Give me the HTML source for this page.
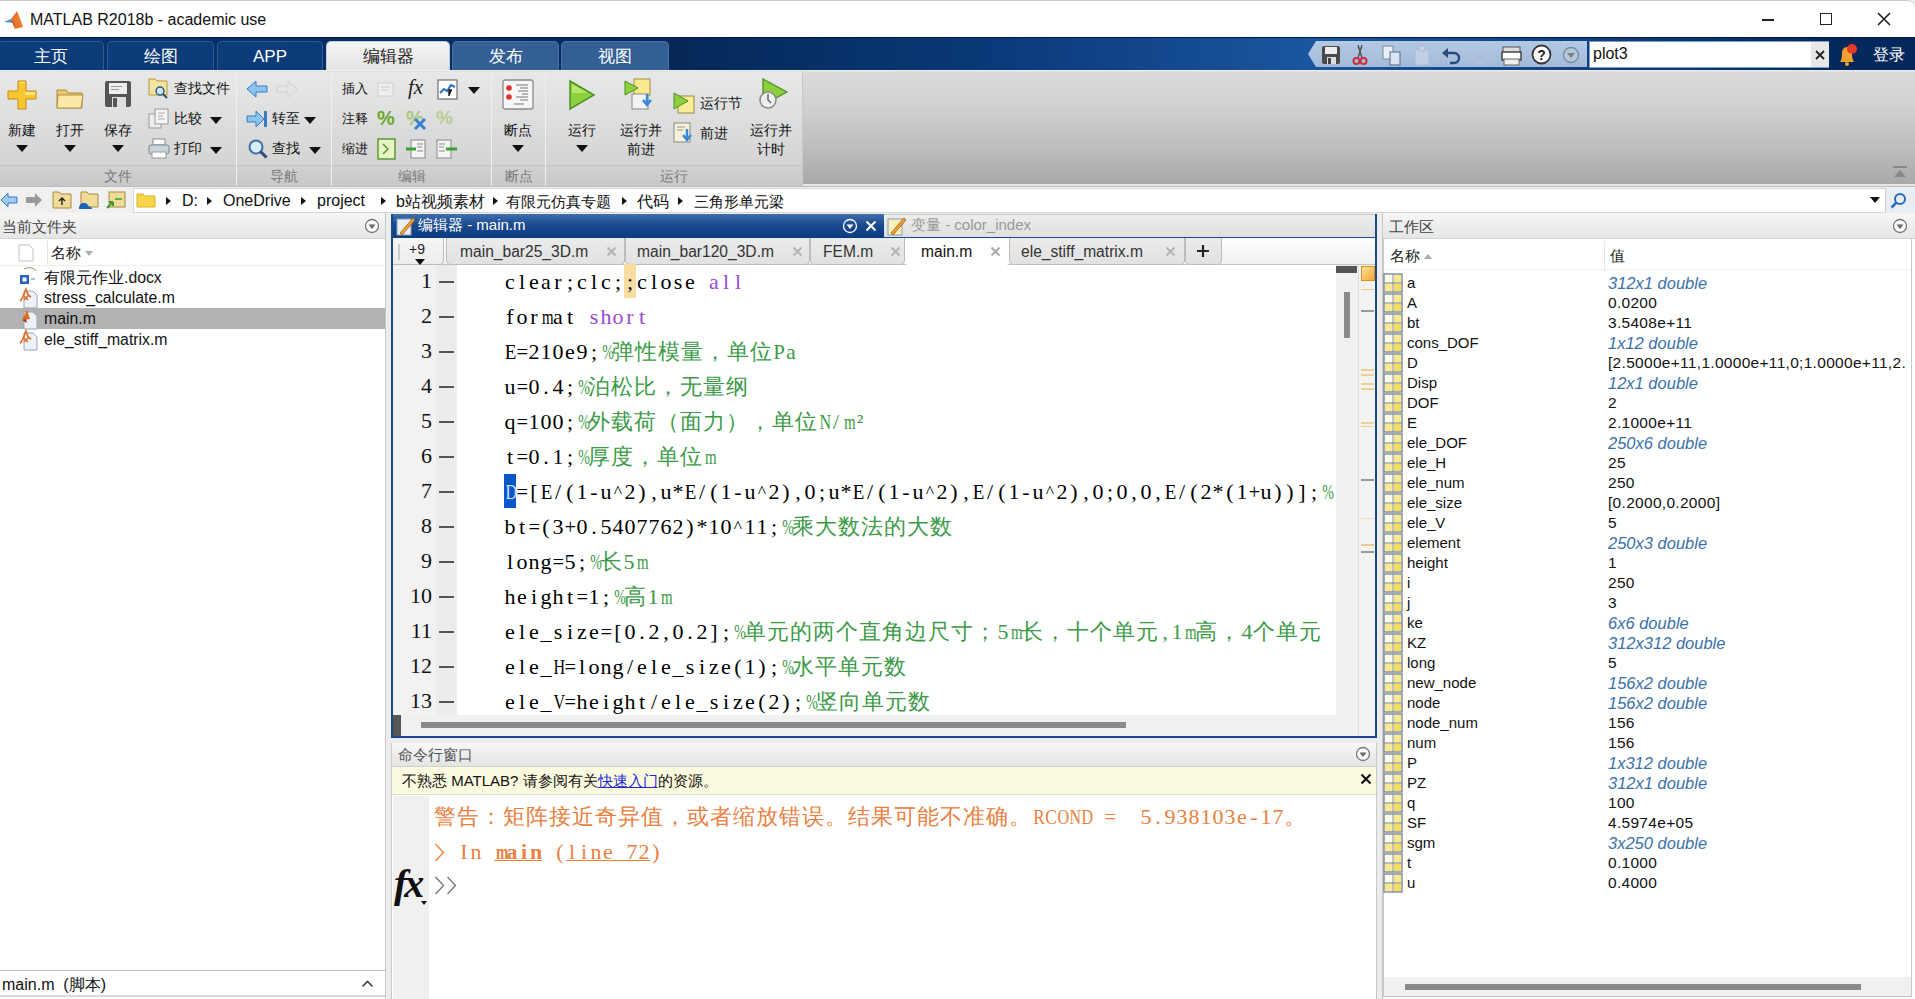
<!DOCTYPE html>
<html><head><meta charset="utf-8">
<style>
*{box-sizing:border-box;margin:0;padding:0}
html,body{width:1915px;height:999px;overflow:hidden;background:#ececec;font-family:"Liberation Sans",sans-serif;color:#000}
.a{position:absolute}
.t{position:absolute;white-space:nowrap}
#title{left:0;top:0;width:1915px;height:37px;background:#fff;border-top:1px solid #cfcfcf;border-radius:0 8px 0 0}
#tabbar{left:0;top:37px;width:1915px;height:33px;background:linear-gradient(90deg,#0a3470 0,#052858 680px,#0a3a7a 1000px,#1b55a0 1310px,#0f3f80 1600px,#05285c 1840px);border-top:1px solid #03183a}
.tab{position:absolute;top:3px;height:29px;border-radius:5px 5px 0 0;background:#0b3b78;border:1px solid #2d5b93;border-bottom:none;color:#fff;font-size:17px;text-align:center;line-height:29px}
.tab.sel{background:linear-gradient(#f4f4f4,#e4e4e4);color:#222;border-color:#c0d0e0;top:3px;height:30px}
#ribbon{left:0;top:70px;width:1915px;height:116px;background:linear-gradient(#f4f4f4 0,#dadada 2px,#cfcfcf 35%,#b9b9b9 75%,#a8a8a8 100%);border-bottom:2px solid #e6e6e6}
.rl{position:absolute;font-size:13.5px;color:#111;white-space:nowrap}
.sec{position:absolute;top:95px;height:21px;background:linear-gradient(#d2d2d2,#c8c8c8);border-top:1px solid #c0c0c0;color:#7a7a7a;font-size:14px;text-align:center;line-height:20px}
.sep{position:absolute;top:4px;width:1px;height:112px;background:#c3c3c3;border-right:1px solid #f0f0f0}
.dd{position:absolute;width:0;height:0;border-left:6px solid transparent;border-right:6px solid transparent;border-top:7px solid #111}
#addr{left:0;top:186px;width:1915px;height:27px;background:#f0f0f0;border-top:1px solid #bdbdbd}
/*ED*/.cl{position:absolute;left:111px;height:35px;line-height:35px;font-family:"Liberation Serif",serif;font-size:22px;white-space:nowrap;color:#111}
.c{display:inline-block;width:12px;text-align:center;font-weight:normal}
.cj{letter-spacing:1px}
.ln{position:absolute;left:0;width:39px;text-align:right;height:35px;line-height:35px;font-family:"Liberation Serif",serif;font-size:22px;color:#111}
.etab{position:absolute;top:24px;height:27px;background:linear-gradient(#ebebeb,#e1e1e1);border:1px solid #bcbcbc;border-top:none;border-radius:0 0 5px 5px}
/*EDEND*/
.cmdl{position:absolute;left:42px;height:35px;line-height:35px;font-family:"Liberation Serif",serif;font-size:22px;white-space:nowrap}
</style></head><body>
<!-- TITLE -->
<div id="title" class="a">
 <svg class="a" style="left:3px;top:8px" width="22" height="22" viewBox="0 0 22 22">
  <path d="M1 13 L8 10 L11 14 Z" fill="#4a8fd0"/>
  <path d="M8 10 L14 2 L20 18 L12 20 Z" fill="#e8772a"/>
  <path d="M14 2 L17 9 L20 18 Z" fill="#f0a040"/>
  <path d="M8 10 L11 14 L12 20 Z" fill="#c84a1a"/>
 </svg>
 <div class="t" style="left:30px;top:10px;font-size:16px;color:#111">MATLAB R2018b - academic use</div>
 <div class="a" style="left:1762px;top:18px;width:12px;height:1.5px;background:#222"></div>
 <div class="a" style="left:1820px;top:12px;width:12px;height:12px;border:1.5px solid #222"></div>
 <svg class="a" style="left:1877px;top:11px" width="14" height="14"><path d="M1 1L13 13M13 1L1 13" stroke="#222" stroke-width="1.6"/></svg>
</div>
<!-- TABBAR -->
<div id="tabbar" class="a">
 <div class="tab" style="left:-2px;width:106px">主页</div>
 <div class="tab" style="left:107px;width:107px">绘图</div>
 <div class="tab" style="left:217px;width:106px">APP</div>
 <div class="tab sel" style="left:326px;width:124px">编辑器</div>
 <div class="tab" style="left:452px;width:107px;background:#335f95;border-color:#4a75a8">发布</div>
 <div class="tab" style="left:561px;width:108px;background:#335f95;border-color:#4a75a8">视图</div>
 <div class="a" style="left:1308px;top:3px;width:279px;height:26px;background:linear-gradient(#b4c9e3,#a2bad9);clip-path:polygon(8px 0,100% 0,100% 100%,8px 100%,0 50%)"></div>
 <svg class="a" style="left:1321px;top:7px" width="20" height="20" viewBox="0 0 20 20"><rect x="1" y="1" width="18" height="18" rx="2" fill="#4a4a4a"/><rect x="4" y="2" width="12" height="7" fill="#eee"/><rect x="6" y="12" width="9" height="7" fill="#ddd"/><rect x="7" y="13" width="3" height="6" fill="#444"/></svg>
 <svg class="a" style="left:1352px;top:6px" width="16" height="22" viewBox="0 0 16 22"><path d="M10 1L6 14M6 1l4 13" stroke="#555" stroke-width="1.5"/><circle cx="4.5" cy="17" r="3" fill="none" stroke="#d03040" stroke-width="2"/><circle cx="11.5" cy="17" r="3" fill="none" stroke="#d03040" stroke-width="2"/></svg>
 <svg class="a" style="left:1382px;top:7px" width="20" height="21" viewBox="0 0 20 21"><rect x="1" y="1" width="10" height="13" fill="#e8eef6" stroke="#7a8aa0"/><rect x="8" y="7" width="10" height="13" fill="#d8e4f2" stroke="#5a6a88"/></svg>
 <svg class="a" style="left:1412px;top:7px" width="20" height="21" viewBox="0 0 20 21"><rect x="3" y="4" width="14" height="16" fill="#c0d0e4" stroke="#a8b8d0"/><rect x="7" y="1" width="6" height="5" fill="#c8d4e4" stroke="#a8b8d0"/></svg>
 <svg class="a" style="left:1441px;top:8px" width="21" height="19" viewBox="0 0 21 19"><path d="M3 7h10a5 5 0 010 10H9" stroke="#2a4a7a" stroke-width="2.5" fill="none"/><path d="M1 7l6-5v10z" fill="#2a4a7a"/></svg>
 <svg class="a" style="left:1471px;top:8px" width="21" height="19" viewBox="0 0 21 19"><path d="M18 7H8a5 5 0 000 10h4" stroke="#b0c0d8" stroke-width="2.5" fill="none"/><path d="M20 7l-6-5v10z" fill="#b0c0d8"/></svg>
 <svg class="a" style="left:1501px;top:7px" width="21" height="21" viewBox="0 0 21 21"><rect x="2" y="2" width="17" height="6" fill="#ddd" stroke="#555"/><rect x="1" y="7" width="19" height="8" fill="#fff" stroke="#444" stroke-width="1.5"/><rect x="3" y="14" width="15" height="6" fill="#eee" stroke="#666"/></svg>
 <svg class="a" style="left:1531px;top:6px" width="21" height="21" viewBox="0 0 21 21"><circle cx="10.5" cy="10.5" r="9" fill="#fff" stroke="#333" stroke-width="1.8"/><text x="10.5" y="15.5" text-anchor="middle" font-family="Liberation Sans" font-weight="bold" font-size="14" fill="#222">?</text></svg>
 <svg class="a" style="left:1562px;top:8px" width="18" height="18" viewBox="0 0 18 18"><circle cx="9" cy="9" r="7.5" fill="#b8c8dc" stroke="#7a8aa0" stroke-width="1.3"/><path d="M5 7h8l-4 5z" fill="#7a8090"/></svg>
 <div class="a" style="left:1589px;top:3px;width:240px;height:27px;background:#fff;border:1px solid #7a9cc8"></div>
 <div class="t" style="left:1593px;top:7px;font-size:16px;color:#111">plot3</div>
 <div class="a" style="left:1811px;top:4px;width:18px;height:25px;background:#e8e8e8"></div>
 <svg class="a" style="left:1815px;top:12px" width="10" height="10"><path d="M1 1L9 9M9 1L1 9" stroke="#222" stroke-width="1.8"/></svg>
 <svg class="a" style="left:1836px;top:5px" width="22" height="24" viewBox="0 0 22 24"><path d="M4 19c2-3 2-6 2-9 0-3 2-6 5-6s5 3 5 6c0 3 0 6 2 9z" fill="#f4a030"/><circle cx="11" cy="21" r="2" fill="#f4a030"/><circle cx="16" cy="6" r="5" fill="#e83a2a"/></svg>
 <div class="t" style="left:1873px;top:7px;font-size:16px;color:#fff">登录</div>
</div>
<!-- RIBBON -->
<div id="ribbon" class="a">
 <div class="a" style="left:0;top:2px;width:802px;height:112px;background:linear-gradient(#e8e8e8,#dcdcdc 50%,#d0d0d0)"></div>
 <!-- 文件 section -->
 <svg class="a" style="left:7px;top:10px" width="30" height="30" viewBox="0 0 30 30"><path d="M11 1h8v10h10v8H19v10h-8V19H1v-8h10z" fill="#f7c630" stroke="#c98a10" stroke-width="1"/><path d="M12 2h6v10h10v3H18V3h-6z" fill="#fff2a0" opacity=".7"/></svg>
 <svg class="a" style="left:56px;top:17px" width="28" height="22" viewBox="0 0 28 22"><path d="M1 3h9l2 3h14v15H1z" fill="#e8c870" stroke="#a98a40"/><path d="M2 8h25l-2 13H1z" fill="#fbe9a8" stroke="#b09040"/></svg>
 <svg class="a" style="left:104px;top:10px" width="28" height="28" viewBox="0 0 28 28"><rect x="1" y="1" width="26" height="26" rx="2" fill="#555"/><rect x="5" y="3" width="18" height="11" fill="#eee"/><rect x="8" y="17" width="14" height="10" fill="#ddd"/><rect x="9" y="18" width="4" height="9" fill="#555"/><rect x="7" y="6" width="11" height="1" fill="#999"/><rect x="7" y="9" width="8" height="1" fill="#999"/></svg>
 <div class="rl" style="left:8px;top:52px">新建</div>
 <div class="rl" style="left:56px;top:52px">打开</div>
 <div class="rl" style="left:104px;top:52px">保存</div>
 <div class="dd" style="left:16px;top:75px"></div>
 <div class="dd" style="left:64px;top:75px"></div>
 <div class="dd" style="left:112px;top:75px"></div>
 <svg class="a" style="left:148px;top:8px" width="22" height="22" viewBox="0 0 22 22"><path d="M1 1h6l2 2h10v14H1z" fill="#f4e4a0" stroke="#b8953a"/><circle cx="12" cy="13" r="4" fill="#cfe4f7" stroke="#2a5a8a" stroke-width="1.5"/><path d="M15 16l4 4" stroke="#2a4a6a" stroke-width="2"/></svg>
 <div class="rl" style="left:174px;top:10px">查找文件</div>
 <svg class="a" style="left:148px;top:38px" width="22" height="22" viewBox="0 0 22 22"><rect x="1" y="6" width="12" height="14" fill="#eee" stroke="#999"/><rect x="7" y="1" width="13" height="15" fill="#f5f5f5" stroke="#999"/><path d="M10 5h7M10 8h5M10 11h7" stroke="#aaa"/></svg>
 <div class="rl" style="left:174px;top:40px">比较</div>
 <div class="dd" style="left:210px;top:47px"></div>
 <svg class="a" style="left:148px;top:68px" width="22" height="22" viewBox="0 0 22 22"><rect x="5" y="1" width="12" height="6" fill="#fff" stroke="#888"/><rect x="1" y="7" width="20" height="9" rx="2" fill="#c8d4dc" stroke="#7a8a96"/><rect x="4" y="14" width="14" height="6" fill="#fff" stroke="#999"/></svg>
 <div class="rl" style="left:174px;top:70px">打印</div>
 <div class="dd" style="left:210px;top:77px"></div>
 <div class="sep" style="left:236px"></div>
 <!-- 导航 -->
 <svg class="a" style="left:246px;top:10px" width="22" height="18" viewBox="0 0 22 18"><path d="M1 9L10 1v5h11v6H10v5z" fill="#8cc4f0" stroke="#3a7ac0"/></svg>
 <svg class="a" style="left:276px;top:10px" width="22" height="18" viewBox="0 0 22 18"><path d="M21 9L12 1v5H1v6h11v5z" fill="#e4e4e4" stroke="#cfcfcf"/></svg>
 <svg class="a" style="left:246px;top:39px" width="22" height="20" viewBox="0 0 22 20"><path d="M1 7h9V2l8 8-8 8v-5H1z" fill="#8cc4f0" stroke="#3a7ac0"/><rect x="18" y="2" width="3" height="16" fill="#3a7ac0"/></svg>
 <div class="rl" style="left:272px;top:40px">转至</div>
 <div class="dd" style="left:304px;top:47px"></div>
 <svg class="a" style="left:247px;top:68px" width="22" height="22" viewBox="0 0 22 22"><circle cx="9" cy="9" r="6.5" fill="#d8ecfa" stroke="#3a6fa8" stroke-width="2"/><path d="M13.5 13.5l6 6" stroke="#2a4a70" stroke-width="3"/></svg>
 <div class="rl" style="left:272px;top:70px">查找</div>
 <div class="dd" style="left:309px;top:77px"></div>
 <div class="sep" style="left:331px"></div>
 <!-- 编辑 -->
 <div class="rl" style="left:342px;top:10px;font-size:13px">插入</div>
 <div class="rl" style="left:342px;top:40px;font-size:13px">注释</div>
 <div class="rl" style="left:342px;top:70px;font-size:13px">缩进</div>
 <svg class="a" style="left:377px;top:11px" width="20" height="18" viewBox="0 0 20 18"><rect x="1" y="2" width="15" height="13" fill="#eee" stroke="#d0d0d0"/><path d="M4 6h9M4 9h7" stroke="#ccc"/></svg>
 <div class="t" style="left:408px;top:5px;font-family:'Liberation Serif',serif;font-style:italic;font-size:21px;color:#222">fx</div>
 <svg class="a" style="left:437px;top:9px" width="21" height="21" viewBox="0 0 21 21"><rect x="1" y="1" width="19" height="19" fill="#fff" stroke="#555"/><path d="M3 14l4-4 3 2 4-6 4 2" stroke="#2a70c0" stroke-width="2" fill="none"/><path d="M12 17v-6h3M12 14h2" stroke="#222" stroke-width="1.5"/></svg>
 <div class="dd" style="left:468px;top:17px"></div>
 <div class="t" style="left:377px;top:37px;font-size:20px;font-weight:bold;color:#6aa82a">%</div>
 <div class="t" style="left:406px;top:37px;font-size:20px;font-weight:bold;color:#a8c880">%</div>
 <svg class="a" style="left:413px;top:47px" width="14" height="14"><path d="M2 2l10 10M12 2L2 12" stroke="#3a80d0" stroke-width="3"/></svg>
 <div class="t" style="left:436px;top:37px;font-size:19px;font-weight:bold;color:#b8cc90">%</div>
 <svg class="a" style="left:378px;top:138px;display:none" width="1" height="1"></svg>
 <svg class="a" style="left:377px;top:68px" width="20" height="22" viewBox="0 0 20 22"><rect x="1" y="1" width="17" height="20" fill="#e8f4c8" stroke="#5a9a30" stroke-width="1.5"/><path d="M6 6l5 5-5 5" stroke="#5a9a30" stroke-width="1.5" fill="none"/></svg>
 <svg class="a" style="left:405px;top:69px" width="22" height="20" viewBox="0 0 22 20"><rect x="6" y="1" width="14" height="18" fill="#f4f4f4" stroke="#888"/><path d="M1 10h10" stroke="#3aa030" stroke-width="3"/><path d="M12 5h6M12 8h5M12 12h6" stroke="#888"/></svg>
 <svg class="a" style="left:436px;top:69px" width="22" height="20" viewBox="0 0 22 20"><rect x="1" y="1" width="14" height="18" fill="#f4f4f4" stroke="#888"/><path d="M10 10h11" stroke="#3aa030" stroke-width="3"/><path d="M3 5h6M3 8h5M3 12h6" stroke="#888"/></svg>
 <div class="sep" style="left:491px"></div>
 <!-- 断点 -->
 <svg class="a" style="left:502px;top:9px" width="32" height="31" viewBox="0 0 32 31"><rect x="1" y="1" width="30" height="29" rx="2" fill="#f6f6f6" stroke="#8a8a8a" stroke-width="1.3"/><circle cx="7" cy="9" r="2.8" fill="#e03030"/><circle cx="7" cy="18" r="2.8" fill="#e03030"/><path d="M14 6h12M18 9h8M16 12h10M20 15h6M14 18h12M18 21h8M12 25h10" stroke="#777" stroke-width="1.2"/></svg>
 <div class="rl" style="left:504px;top:52px">断点</div>
 <div class="dd" style="left:512px;top:75px"></div>
 <div class="sep" style="left:545px"></div>
 <!-- 运行 -->
 <svg class="a" style="left:568px;top:9px" width="28" height="32" viewBox="0 0 28 32"><path d="M2 2L26 16L2 30z" fill="#8cd040" stroke="#4a9020" stroke-width="1.5"/><path d="M4 5L20 14L4 14z" fill="#c8f080" opacity=".7"/></svg>
 <div class="rl" style="left:568px;top:52px">运行</div>
 <div class="dd" style="left:576px;top:75px"></div>
 <svg class="a" style="left:624px;top:8px" width="32" height="33" viewBox="0 0 32 33"><rect x="10" y="1" width="16" height="16" fill="#f8e890" stroke="#a09040"/><rect x="8" y="16" width="16" height="15" fill="#f4f4f4" stroke="#888"/><path d="M1 3L14 10L1 17z" fill="#8cd040" stroke="#4a9020"/><path d="M23 16v10M19 22l4 5 4-5" stroke="#3a88d8" stroke-width="2.5" fill="none"/></svg>
 <div class="rl" style="left:620px;top:52px">运行并</div>
 <div class="rl" style="left:627px;top:71px">前进</div>
 <svg class="a" style="left:673px;top:22px" width="22" height="22" viewBox="0 0 22 22"><rect x="5" y="4" width="16" height="17" fill="#f8ec98" stroke="#9a8a40"/><path d="M1 1L15 9L1 17z" fill="#8cd040" stroke="#4a9020"/></svg>
 <div class="rl" style="left:700px;top:25px">运行节</div>
 <svg class="a" style="left:673px;top:52px" width="22" height="22" viewBox="0 0 22 22"><rect x="1" y="1" width="16" height="19" fill="#f6f2d8" stroke="#888"/><path d="M4 5h8M4 8h6" stroke="#999"/><path d="M14 7v10M10 13l4 5 4-5" stroke="#3a88d8" stroke-width="2.5" fill="none"/></svg>
 <div class="rl" style="left:700px;top:55px">前进</div>
 <svg class="a" style="left:755px;top:8px" width="34" height="34" viewBox="0 0 34 34"><path d="M8 1L32 14L8 27z" fill="#8cd040" stroke="#4a9020" stroke-width="1.3"/><circle cx="13" cy="22" r="8" fill="#eee" stroke="#888" stroke-width="1.5"/><path d="M13 16v6l3 3" stroke="#555" stroke-width="1.3" fill="none"/></svg>
 <div class="rl" style="left:750px;top:52px">运行并</div>
 <div class="rl" style="left:757px;top:71px">计时</div>
 <!-- section labels -->
 <div class="sec" style="left:0;width:236px">文件</div>
 <div class="sec" style="left:237px;width:94px">导航</div>
 <div class="sec" style="left:332px;width:159px">编辑</div>
 <div class="sec" style="left:492px;width:53px">断点</div>
 <div class="sec" style="left:546px;width:256px">运行</div>
 <div class="a" style="left:802px;top:4px;width:1px;height:112px;background:#c8c8c8"></div>
 <svg class="a" style="left:1892px;top:95px" width="16" height="14" viewBox="0 0 16 14"><rect x="1" y="1" width="14" height="2" fill="#888"/><path d="M2 12L8 5L14 12z" fill="#888"/></svg>
</div>
<div id="addr" class="a">
 <svg class="a" style="left:0px;top:5px" width="18" height="16" viewBox="0 0 18 16"><path d="M1 8L8 1v4h9v6H8v4z" fill="#9ccaf0" stroke="#3a7ac0"/></svg>
 <svg class="a" style="left:25px;top:5px" width="18" height="16" viewBox="0 0 18 16"><path d="M17 8L10 1v4H1v6h9v4z" fill="#9a9a9a"/></svg>
 <svg class="a" style="left:52px;top:4px" width="20" height="18" viewBox="0 0 20 18"><path d="M1 1h6l2 2h10v14H1z" fill="#f0dc98" stroke="#a88a40"/><path d="M10 14V7M7 10l3-3 3 3" stroke="#222" stroke-width="1.4" fill="none"/></svg>
 <svg class="a" style="left:78px;top:4px" width="21" height="19" viewBox="0 0 21 19"><path d="M3 1h6l2 2h9v13H3z" fill="#f0dc98" stroke="#a88a40"/><path d="M1 18c0-4 2-6 5-6s4 2 5 4c1-1 3 0 3 2z" fill="#1a62b8"/></svg>
 <svg class="a" style="left:105px;top:4px" width="21" height="19" viewBox="0 0 21 19"><rect x="4" y="1" width="16" height="15" fill="#f0dc98" stroke="#a88a40"/><path d="M2 17l6-6M8 11v4M8 11h-4" stroke="#3a9a30" stroke-width="2" fill="none"/><path d="M10 8h7" stroke="#3a9a30" stroke-width="1.5"/></svg>
 <div class="a" style="left:133px;top:1px;width:1766px;height:25px;background:#fff;border:1px solid #d6d6d6"></div>
 <svg class="a" style="left:136px;top:6px" width="20" height="15" viewBox="0 0 20 15"><path d="M1 1h6l2 2h10v11H1z" fill="#f7d44a" stroke="#e0b020"/></svg>
 <div class="t" style="left:0;top:5px;font-size:16px;color:#111">
  <span class="a" style="left:166px;top:5px;border-left:5px solid #111;border-top:4px solid transparent;border-bottom:4px solid transparent"></span>
  <span class="t" style="left:182px;top:0">D:</span>
  <span class="a" style="left:207px;top:5px;border-left:5px solid #111;border-top:4px solid transparent;border-bottom:4px solid transparent"></span>
  <span class="t" style="left:223px;top:0">OneDrive</span>
  <span class="a" style="left:301px;top:5px;border-left:5px solid #111;border-top:4px solid transparent;border-bottom:4px solid transparent"></span>
  <span class="t" style="left:317px;top:0">project</span>
  <span class="a" style="left:381px;top:5px;border-left:5px solid #111;border-top:4px solid transparent;border-bottom:4px solid transparent"></span>
  <span class="t" style="left:396px;top:0">b站视频素材</span>
  <span class="a" style="left:493px;top:5px;border-left:5px solid #111;border-top:4px solid transparent;border-bottom:4px solid transparent"></span>
  <span class="t" style="left:506px;top:0;font-size:15.2px">有限元仿真专题</span>
  <span class="a" style="left:622px;top:5px;border-left:5px solid #111;border-top:4px solid transparent;border-bottom:4px solid transparent"></span>
  <span class="t" style="left:637px;top:0">代码</span>
  <span class="a" style="left:678px;top:5px;border-left:5px solid #111;border-top:4px solid transparent;border-bottom:4px solid transparent"></span>
  <span class="t" style="left:694px;top:0;font-size:15.2px">三角形单元梁</span>
 </div>
 <div class="dd" style="left:1870px;top:10px;border-left-width:5px;border-right-width:5px;border-top-width:6px"></div>
 <div class="a" style="left:1885px;top:1px;width:30px;height:25px;background:#e9eef4;border-left:1px solid #d0d0d0"></div>
 <svg class="a" style="left:1890px;top:5px" width="17" height="17" viewBox="0 0 17 17"><circle cx="10" cy="7" r="5" fill="none" stroke="#2a6ab8" stroke-width="2"/><path d="M6.5 10.5L1.5 15.5" stroke="#2a6ab8" stroke-width="2.5"/></svg>
</div>
<div id="left" class="a" style="left:0;top:213px;width:386px;height:786px;background:#fff;border-right:1px solid #c6c6c6">
 <div class="a" style="left:0;top:0;width:385px;height:26px;background:linear-gradient(#f6f6f6,#e6e6e6);border-bottom:1px solid #d4d4d4"></div>
 <div class="t" style="left:2px;top:5px;font-size:15px;color:#444">当前文件夹</div>
 <svg class="a" style="left:364px;top:5px" width="16" height="16" viewBox="0 0 16 16"><circle cx="8" cy="8" r="6.5" fill="#fafafa" stroke="#777" stroke-width="1.3"/><path d="M4.5 6.5h7L8 11z" fill="#666"/></svg>
 <div class="a" style="left:0;top:27px;width:385px;height:26px;background:#fff;border-bottom:1px solid #eee"></div>
 <svg class="a" style="left:18px;top:31px" width="16" height="18" viewBox="0 0 16 18"><path d="M1 1h10l4 4v12H1z" fill="#fff" stroke="#c4c4c4"/></svg>
 <div class="a" style="left:47px;top:28px;width:1px;height:24px;background:#e4e4e4"></div>
 <div class="t" style="left:51px;top:31px;font-size:15px;color:#222">名称</div>
 <div class="a" style="left:85px;top:38px;border-left:4px solid transparent;border-right:4px solid transparent;border-top:5px solid #aaa"></div>
 <div class="a" style="left:0;top:95px;width:385px;height:21px;background:#b2b2b2"></div>
 <svg class="a" style="left:19px;top:54px" width="20" height="20" viewBox="0 0 20 20"><path d="M5 2c4-2 10-2 12 2" stroke="#a08a60" fill="none"/><rect x="1" y="8" width="9" height="9" fill="#2a64b8"/><rect x="3.5" y="10.5" width="4" height="4" fill="#fff"/><path d="M12 12h4" stroke="#8ab0e0" stroke-width="1.5"/></svg>
 <div class="t" style="left:44px;top:55px;font-size:15.8px;color:#111">有限元作业.docx</div>
 <svg class="a" style="left:19px;top:74px" width="20" height="22" viewBox="0 0 20 22"><path d="M5 4h9l4 4v13H5z" fill="#eef2f8" stroke="#9aa4b8"/><path d="M1 14c3-2 4-8 6-12l2 6 3 2" stroke="#e06a20" stroke-width="1.6" fill="none"/><path d="M5 9l4 4M9 9l-4 4" stroke="#e07020" stroke-width="1.5"/></svg>
 <div class="t" style="left:44px;top:76px;font-size:15.8px;color:#111">stress_calculate.m</div>
 <svg class="a" style="left:19px;top:95px" width="20" height="22" viewBox="0 0 20 22"><path d="M5 4h9l4 4v13H5z" fill="#eef2f8" stroke="#9aa4b8"/><path d="M3 12L8 2l3 9z" fill="#e06a20"/><path d="M3 12l4-1 1 4z" fill="#a03a10"/></svg>
 <div class="t" style="left:44px;top:97px;font-size:15.8px;color:#111">main.m</div>
 <svg class="a" style="left:19px;top:116px" width="20" height="22" viewBox="0 0 20 22"><path d="M5 4h9l4 4v13H5z" fill="#eef2f8" stroke="#9aa4b8"/><path d="M1 14c3-2 4-8 6-12l2 6 3 2" stroke="#e06a20" stroke-width="1.6" fill="none"/><path d="M5 9l4 4M9 9l-4 4" stroke="#e07020" stroke-width="1.5"/></svg>
 <div class="t" style="left:44px;top:118px;font-size:15.8px;color:#111">ele_stiff_matrix.m</div>
 <div class="a" style="left:0;top:757px;width:385px;height:1px;background:#bdbdbd"></div>
 <div class="a" style="left:0;top:758px;width:385px;height:26px;background:#fff;border-bottom:2px solid #d8d8d8"></div>
 <div class="t" style="left:2px;top:762px;font-size:16px;color:#111">main.m&nbsp; (脚本)</div>
 <svg class="a" style="left:361px;top:766px" width="13" height="9" viewBox="0 0 13 9"><path d="M1.5 7.5L6.5 2.5L11.5 7.5" stroke="#444" stroke-width="1.6" fill="none"/></svg>
</div>
<div id="editor" class="a" style="left:391px;top:214px;width:986px;height:524px;background:#fff;border:2px solid #17498a;border-top:none;overflow:hidden">
 <div class="a" style="left:-2px;top:0;width:493px;height:25px;background:linear-gradient(#3f6fae,#1a4a8e 45%,#0b3a7c)"></div>
 <svg class="a" style="left:3px;top:2px" width="20" height="20" viewBox="0 0 20 20"><rect x="1" y="3" width="14" height="16" fill="#e8eef6" stroke="#8a9ab0"/><path d="M4 17L17 2l2 2L6 19z" fill="#f0a030" stroke="#a06010" stroke-width=".8"/></svg>
 <div class="t" style="left:25px;top:2px;font-size:15px;color:#fff">编辑器 - main.m</div>
 <svg class="a" style="left:449px;top:4px" width="16" height="16" viewBox="0 0 16 16"><circle cx="8" cy="8" r="6.5" fill="none" stroke="#fff" stroke-width="1.3"/><path d="M4.5 6.5h7L8 11z" fill="#fff"/></svg>
 <svg class="a" style="left:472px;top:6px" width="12" height="12"><path d="M1.5 1.5L10.5 10.5M10.5 1.5L1.5 10.5" stroke="#fff" stroke-width="2"/></svg>
 <div class="a" style="left:491px;top:0;width:493px;height:25px;background:linear-gradient(#ececec,#e0e0e0);border-top:1px solid #c8c8c8;border-bottom:2px solid #17498a"></div>
 <svg class="a" style="left:494px;top:2px" width="20" height="20" viewBox="0 0 20 20"><rect x="1" y="3" width="14" height="16" fill="#f6f0c0" stroke="#8a9ab0"/><path d="M4 17L17 2l2 2L6 19z" fill="#f0a030" stroke="#a06010" stroke-width=".8"/></svg>
 <div class="t" style="left:518px;top:2px;font-size:15px;color:#999">变量 - color_index</div>
 <!-- tab strip -->
 <div class="a" style="left:0;top:24px;width:984px;height:27px;background:linear-gradient(#fdfdfd,#f1f1f1);border-bottom:1px solid #c4c4c4"></div>
 <div class="a" style="left:0;top:24px;width:51px;height:27px;background:linear-gradient(#f6f6f6,#ececec);border-right:1px solid #bcbcbc;border-bottom:1px solid #bcbcbc;border-radius:0 0 5px 0"></div>
 <div class="a" style="left:5px;top:30px;width:2px;height:16px;background:#ccc"></div>
 <div class="t" style="left:16px;top:27px;font-size:14px;color:#222">+9</div>
 <div class="a" style="left:22px;top:45px;border-left:5px solid transparent;border-right:5px solid transparent;border-top:6px solid #111"></div>
 <div class="etab" style="left:53px;width:179px"></div><div class="t" style="left:67px;top:29px;font-size:15.6px;color:#333">main_bar25_3D.m</div><svg class="a" style="left:213px;top:32px" width="11" height="11"><path d="M1.5 1.5L9.5 9.5M9.5 1.5L1.5 9.5" stroke="#b4b4b4" stroke-width="2"/></svg><div class="etab" style="left:232px;width:185px"></div><div class="t" style="left:244px;top:29px;font-size:15.6px;color:#333">main_bar120_3D.m</div><svg class="a" style="left:399px;top:32px" width="11" height="11"><path d="M1.5 1.5L9.5 9.5M9.5 1.5L1.5 9.5" stroke="#b4b4b4" stroke-width="2"/></svg><div class="etab" style="left:417px;width:95px"></div><div class="t" style="left:430px;top:29px;font-size:15.6px;color:#333">FEM.m</div><svg class="a" style="left:497px;top:32px" width="11" height="11"><path d="M1.5 1.5L9.5 9.5M9.5 1.5L1.5 9.5" stroke="#b4b4b4" stroke-width="2"/></svg><div class="etab" style="left:616px;width:176px"></div><div class="t" style="left:628px;top:29px;font-size:15.6px;color:#333">ele_stiff_matrix.m</div><svg class="a" style="left:772px;top:32px" width="11" height="11"><path d="M1.5 1.5L9.5 9.5M9.5 1.5L1.5 9.5" stroke="#b4b4b4" stroke-width="2"/></svg>
 <div class="etab" style="left:512px;width:104px;background:#fff;height:28px;border:none"></div>
 <div class="t" style="left:528px;top:29px;font-size:15.6px;color:#111">main.m</div>
 <svg class="a" style="left:597px;top:32px" width="11" height="11"><path d="M1.5 1.5L9.5 9.5M9.5 1.5L1.5 9.5" stroke="#aaa" stroke-width="2"/></svg>
 <div class="etab" style="left:792px;width:37px"></div>
 <svg class="a" style="left:803px;top:30px" width="14" height="14"><path d="M7 1v12M1 7h12" stroke="#222" stroke-width="2.2"/></svg>
 <!-- gutter -->
 <div class="a" style="left:0;top:51px;width:43px;height:450px;background:#f2f2f2"></div>
 <div class="a" style="left:43px;top:51px;width:21px;height:450px;background:#ececec"></div>
 <div class="cl" style="top:50px"><span style="color:#000"><b class="c">c</b><b class="c">l</b><b class="c">e</b><b class="c">a</b><b class="c">r</b><b class="c">;</b><b class="c">c</b><b class="c">l</b><b class="c">c</b><b class="c">;</b></span><b class="c" style="background:#f8dca0;height:34px;vertical-align:top">;</b><span style="color:#000"><b class="c">c</b><b class="c">l</b><b class="c">o</b><b class="c">s</b><b class="c">e</b><b class="c">&nbsp;</b></span><span style="color:#9a4ad0"><b class="c">a</b><b class="c">l</b><b class="c">l</b></span></div>
<div class="ln" style="top:49px">1</div>
<div class="a" style="left:46px;top:67px;width:15px;height:2px;background:#555"></div>
<div class="cl" style="top:85px"><span style="color:#000"><b class="c">f</b><b class="c">o</b><b class="c">r</b><b class="c" style="transform:scaleX(0.677);">m</b><b class="c">a</b><b class="c">t</b><b class="c">&nbsp;</b></span><span style="color:#9a4ad0"><b class="c">s</b><b class="c">h</b><b class="c">o</b><b class="c">r</b><b class="c">t</b></span></div>
<div class="ln" style="top:84px">2</div>
<div class="a" style="left:46px;top:102px;width:15px;height:2px;background:#555"></div>
<div class="cl" style="top:120px"><span style="color:#000"><b class="c" style="transform:scaleX(0.863);">E</b><b class="c" style="transform:scaleX(0.935);">=</b><b class="c">2</b><b class="c">1</b><b class="c">0</b><b class="c">e</b><b class="c">9</b><b class="c">;</b></span><span style="color:#3a9a46"><b class="c" style="transform:scaleX(0.633);">%</b></span><span class="cj" style="color:#3a9a46">弹性模量，单位</span><span style="color:#3a9a46"><b class="c" style="transform:scaleX(0.947);">P</b><b class="c">a</b></span></div>
<div class="ln" style="top:119px">3</div>
<div class="a" style="left:46px;top:137px;width:15px;height:2px;background:#555"></div>
<div class="cl" style="top:155px"><span style="color:#000"><b class="c">u</b><b class="c" style="transform:scaleX(0.935);">=</b><b class="c">0</b><b class="c">.</b><b class="c">4</b><b class="c">;</b></span><span style="color:#3a9a46"><b class="c" style="transform:scaleX(0.633);">%</b></span><span class="cj" style="color:#3a9a46">泊松比，无量纲</span></div>
<div class="ln" style="top:154px">4</div>
<div class="a" style="left:46px;top:172px;width:15px;height:2px;background:#555"></div>
<div class="cl" style="top:190px"><span style="color:#000"><b class="c">q</b><b class="c" style="transform:scaleX(0.935);">=</b><b class="c">1</b><b class="c">0</b><b class="c">0</b><b class="c">;</b></span><span style="color:#3a9a46"><b class="c" style="transform:scaleX(0.633);">%</b></span><span class="cj" style="color:#3a9a46">外载荷（面力），单位</span><span style="color:#3a9a46"><b class="c" style="transform:scaleX(0.730);">N</b><b class="c">/</b><b class="c" style="transform:scaleX(0.677);">m</b><b class="c">²</b></span></div>
<div class="ln" style="top:189px">5</div>
<div class="a" style="left:46px;top:207px;width:15px;height:2px;background:#555"></div>
<div class="cl" style="top:225px"><span style="color:#000"><b class="c">t</b><b class="c" style="transform:scaleX(0.935);">=</b><b class="c">0</b><b class="c">.</b><b class="c">1</b><b class="c">;</b></span><span style="color:#3a9a46"><b class="c" style="transform:scaleX(0.633);">%</b></span><span class="cj" style="color:#3a9a46">厚度，单位</span><span style="color:#3a9a46"><b class="c" style="transform:scaleX(0.677);">m</b></span></div>
<div class="ln" style="top:224px">6</div>
<div class="a" style="left:46px;top:242px;width:15px;height:2px;background:#555"></div>
<div class="cl" style="top:260px"><span style="display:inline-block;background:#0a58c8;height:34px;vertical-align:top;color:#cfe0ff"><b class="c" style="transform:scaleX(0.730);">D</b></span><span style="color:#000"><b class="c" style="transform:scaleX(0.935);">=</b><b class="c">[</b><b class="c" style="transform:scaleX(0.863);">E</b><b class="c">/</b><b class="c">(</b><b class="c">1</b><b class="c">-</b><b class="c">u</b><b class="c" style="transform:scale(.8) translateY(-1px);">^</b><b class="c">2</b><b class="c">)</b><b class="c">,</b><b class="c">u</b><b class="c">*</b><b class="c" style="transform:scaleX(0.863);">E</b><b class="c">/</b><b class="c">(</b><b class="c">1</b><b class="c">-</b><b class="c">u</b><b class="c" style="transform:scale(.8) translateY(-1px);">^</b><b class="c">2</b><b class="c">)</b><b class="c">,</b><b class="c">0</b><b class="c">;</b><b class="c">u</b><b class="c">*</b><b class="c" style="transform:scaleX(0.863);">E</b><b class="c">/</b><b class="c">(</b><b class="c">1</b><b class="c">-</b><b class="c">u</b><b class="c" style="transform:scale(.8) translateY(-1px);">^</b><b class="c">2</b><b class="c">)</b><b class="c">,</b><b class="c" style="transform:scaleX(0.863);">E</b><b class="c">/</b><b class="c">(</b><b class="c">1</b><b class="c">-</b><b class="c">u</b><b class="c" style="transform:scale(.8) translateY(-1px);">^</b><b class="c">2</b><b class="c">)</b><b class="c">,</b><b class="c">0</b><b class="c">;</b><b class="c">0</b><b class="c">,</b><b class="c">0</b><b class="c">,</b><b class="c" style="transform:scaleX(0.863);">E</b><b class="c">/</b><b class="c">(</b><b class="c">2</b><b class="c">*</b><b class="c">(</b><b class="c">1</b><b class="c" style="transform:scaleX(0.935);">+</b><b class="c">u</b><b class="c">)</b><b class="c">)</b><b class="c">]</b><b class="c">;</b></span><span style="color:#3a9a46"><b class="c" style="transform:scaleX(0.633);">%</b><b class="c">,</b></span></div>
<div class="ln" style="top:259px">7</div>
<div class="a" style="left:46px;top:277px;width:15px;height:2px;background:#555"></div>
<div class="cl" style="top:295px"><span style="color:#000"><b class="c">b</b><b class="c">t</b><b class="c" style="transform:scaleX(0.935);">=</b><b class="c">(</b><b class="c">3</b><b class="c" style="transform:scaleX(0.935);">+</b><b class="c">0</b><b class="c">.</b><b class="c">5</b><b class="c">4</b><b class="c">0</b><b class="c">7</b><b class="c">7</b><b class="c">6</b><b class="c">2</b><b class="c">)</b><b class="c">*</b><b class="c">1</b><b class="c">0</b><b class="c" style="transform:scale(.8) translateY(-1px);">^</b><b class="c">1</b><b class="c">1</b><b class="c">;</b></span><span style="color:#3a9a46"><b class="c" style="transform:scaleX(0.633);">%</b></span><span class="cj" style="color:#3a9a46">乘大数法的大数</span></div>
<div class="ln" style="top:294px">8</div>
<div class="a" style="left:46px;top:312px;width:15px;height:2px;background:#555"></div>
<div class="cl" style="top:330px"><span style="color:#000"><b class="c">l</b><b class="c">o</b><b class="c">n</b><b class="c">g</b><b class="c" style="transform:scaleX(0.935);">=</b><b class="c">5</b><b class="c">;</b></span><span style="color:#3a9a46"><b class="c" style="transform:scaleX(0.633);">%</b></span><span class="cj" style="color:#3a9a46">长</span><span style="color:#3a9a46"><b class="c">5</b><b class="c" style="transform:scaleX(0.677);">m</b></span></div>
<div class="ln" style="top:329px">9</div>
<div class="a" style="left:46px;top:347px;width:15px;height:2px;background:#555"></div>
<div class="cl" style="top:365px"><span style="color:#000"><b class="c">h</b><b class="c">e</b><b class="c">i</b><b class="c">g</b><b class="c">h</b><b class="c">t</b><b class="c" style="transform:scaleX(0.935);">=</b><b class="c">1</b><b class="c">;</b></span><span style="color:#3a9a46"><b class="c" style="transform:scaleX(0.633);">%</b></span><span class="cj" style="color:#3a9a46">高</span><span style="color:#3a9a46"><b class="c">1</b><b class="c" style="transform:scaleX(0.677);">m</b></span></div>
<div class="ln" style="top:364px">10</div>
<div class="a" style="left:46px;top:382px;width:15px;height:2px;background:#555"></div>
<div class="cl" style="top:400px"><span style="color:#000"><b class="c">e</b><b class="c">l</b><b class="c">e</b><b class="c">_</b><b class="c">s</b><b class="c">i</b><b class="c">z</b><b class="c">e</b><b class="c" style="transform:scaleX(0.935);">=</b><b class="c">[</b><b class="c">0</b><b class="c">.</b><b class="c">2</b><b class="c">,</b><b class="c">0</b><b class="c">.</b><b class="c">2</b><b class="c">]</b><b class="c">;</b></span><span style="color:#3a9a46"><b class="c" style="transform:scaleX(0.633);">%</b></span><span class="cj" style="color:#3a9a46">单元的两个直角边尺寸；</span><span style="color:#3a9a46"><b class="c">5</b><b class="c" style="transform:scaleX(0.677);">m</b></span><span class="cj" style="color:#3a9a46">长，十个单元</span><span style="color:#3a9a46"><b class="c">,</b><b class="c">1</b><b class="c" style="transform:scaleX(0.677);">m</b></span><span class="cj" style="color:#3a9a46">高，</span><span style="color:#3a9a46"><b class="c">4</b></span><span class="cj" style="color:#3a9a46">个单元</span></div>
<div class="ln" style="top:399px">11</div>
<div class="a" style="left:46px;top:417px;width:15px;height:2px;background:#555"></div>
<div class="cl" style="top:435px"><span style="color:#000"><b class="c">e</b><b class="c">l</b><b class="c">e</b><b class="c">_</b><b class="c" style="transform:scaleX(0.730);">H</b><b class="c" style="transform:scaleX(0.935);">=</b><b class="c">l</b><b class="c">o</b><b class="c">n</b><b class="c">g</b><b class="c">/</b><b class="c">e</b><b class="c">l</b><b class="c">e</b><b class="c">_</b><b class="c">s</b><b class="c">i</b><b class="c">z</b><b class="c">e</b><b class="c">(</b><b class="c">1</b><b class="c">)</b><b class="c">;</b></span><span style="color:#3a9a46"><b class="c" style="transform:scaleX(0.633);">%</b></span><span class="cj" style="color:#3a9a46">水平单元数</span></div>
<div class="ln" style="top:434px">12</div>
<div class="a" style="left:46px;top:452px;width:15px;height:2px;background:#555"></div>
<div class="cl" style="top:470px"><span style="color:#000"><b class="c">e</b><b class="c">l</b><b class="c">e</b><b class="c">_</b><b class="c" style="transform:scaleX(0.730);">V</b><b class="c" style="transform:scaleX(0.935);">=</b><b class="c">h</b><b class="c">e</b><b class="c">i</b><b class="c">g</b><b class="c">h</b><b class="c">t</b><b class="c">/</b><b class="c">e</b><b class="c">l</b><b class="c">e</b><b class="c">_</b><b class="c">s</b><b class="c">i</b><b class="c">z</b><b class="c">e</b><b class="c">(</b><b class="c">2</b><b class="c">)</b><b class="c">;</b></span><span style="color:#3a9a46"><b class="c" style="transform:scaleX(0.633);">%</b></span><span class="cj" style="color:#3a9a46">竖向单元数</span></div>
<div class="ln" style="top:469px">13</div>
<div class="a" style="left:46px;top:487px;width:15px;height:2px;background:#555"></div>

 <!-- scrollbars -->
 <div class="a" style="left:943px;top:51px;width:22px;height:450px;background:#f0f0f0"></div>
 <div class="a" style="left:943px;top:52px;width:21px;height:7px;background:#555"></div>
 <div class="a" style="left:951px;top:78px;width:6px;height:46px;background:#8a8a8a"></div>
 <div class="a" style="left:965px;top:51px;width:19px;height:472px;background:#f3f3f3;border-left:1px solid #ddd"></div>
 <div class="a" style="left:968px;top:52px;width:14px;height:15px;background:linear-gradient(135deg,#ffe0a0,#f8a830);border:1px solid #d89020"></div>
 <div class="a" style="left:968px;top:75px;width:13px;height:1px;background:#f4c890"></div>
 <div class="a" style="left:968px;top:96px;width:13px;height:2px;background:#999"></div>
 <div class="a" style="left:968px;top:155px;width:13px;height:2px;background:#f0d090"></div>
 <div class="a" style="left:968px;top:160px;width:13px;height:2px;background:#f0d090"></div>
 <div class="a" style="left:968px;top:169px;width:13px;height:2px;background:#f0d090"></div>
 <div class="a" style="left:968px;top:174px;width:13px;height:2px;background:#f0d090"></div>
 <div class="a" style="left:968px;top:208px;width:13px;height:2px;background:#f0d090"></div>
 <div class="a" style="left:968px;top:212px;width:13px;height:1px;background:#f0d090"></div>
 <div class="a" style="left:968px;top:265px;width:13px;height:2px;background:#999"></div>
 <div class="a" style="left:968px;top:304px;width:13px;height:1px;background:#f4dca8"></div>
 <div class="a" style="left:968px;top:330px;width:13px;height:2px;background:#f0c890"></div>
 <div class="a" style="left:968px;top:337px;width:13px;height:2px;background:#999"></div>
 <div class="a" style="left:0;top:501px;width:965px;height:22px;background:#f0f0f0"></div>
 <div class="a" style="left:0;top:501px;width:8px;height:22px;background:#555"></div>
 <div class="a" style="left:28px;top:508px;width:705px;height:6px;background:#8a8a8a"></div>
</div>
<!--CMD-->
<div id="cmd" class="a" style="left:391px;top:743px;width:986px;height:256px;background:#fff;border-left:1px solid #c8c8c8;border-right:1px solid #c8c8c8">
 <div class="a" style="left:0;top:0;width:984px;height:24px;background:linear-gradient(#f7f7f7,#e4e4e4);border-bottom:1px solid #cfcfcf"></div>
 <div class="t" style="left:6px;top:3px;font-size:15px;color:#555">命令行窗口</div>
 <svg class="a" style="left:963px;top:3px" width="16" height="16" viewBox="0 0 16 16"><circle cx="8" cy="8" r="6.5" fill="#fafafa" stroke="#777" stroke-width="1.3"/><path d="M4.5 6.5h7L8 11z" fill="#666"/></svg>
 <div class="a" style="left:0;top:24px;width:984px;height:28px;background:#fdfbdf;border-bottom:1px solid #dedede"></div>
 <div class="t" style="left:10px;top:29px;font-size:15px;color:#111">不熟悉 MATLAB? 请参阅有关<span style="color:#1a2ad8;text-decoration:underline">快速入门</span>的资源。</div>
 <svg class="a" style="left:968px;top:30px" width="12" height="12"><path d="M1.5 1.5L10.5 10.5M10.5 1.5L1.5 10.5" stroke="#111" stroke-width="2.2"/></svg>
 <div class="a" style="left:1px;top:53px;width:36px;height:203px;background:#f0f0f0"></div>
 <div class="cmdl" style="top:56px;color:#ea8040"><span class="cj">警告：矩阵接近奇异值，或者缩放错误。结果可能不准确。</span><b class="c" style="transform:scaleX(0.790);">R</b><b class="c" style="transform:scaleX(0.790);">C</b><b class="c" style="transform:scaleX(0.730);">O</b><b class="c" style="transform:scaleX(0.730);">N</b><b class="c" style="transform:scaleX(0.730);">D</b><b class="c">&nbsp;</b><b class="c" style="transform:scaleX(0.935);">=</b><b class="c">&nbsp;</b><b class="c">&nbsp;</b><b class="c">5</b><b class="c">.</b><b class="c">9</b><b class="c">3</b><b class="c">8</b><b class="c">1</b><b class="c">0</b><b class="c">3</b><b class="c">e</b><b class="c">-</b><b class="c">1</b><b class="c">7</b><span class="cj">。</span></div>
 <div class="cmdl" style="top:91px;color:#ea8040"><svg style="display:inline-block;vertical-align:top;margin-top:9px;width:12px;height:19px" viewBox="0 0 12 19"><path d="M1.5 1L9.5 9.5L1.5 18" stroke="#ea8040" stroke-width="1.3" fill="none"/></svg><b class="c">&nbsp;</b><b class="c">I</b><b class="c">n</b><b class="c">&nbsp;</b><span style="display:inline-block;height:27px;vertical-align:top;border-bottom:1.5px solid #ea8040"><b class="c" style="transform:scaleX(0.677);font-weight:bold;">m</b><b class="c" style="font-weight:bold;">a</b><b class="c" style="font-weight:bold;">i</b><b class="c" style="font-weight:bold;">n</b></span><b class="c">&nbsp;</b><b class="c">(</b><span style="display:inline-block;height:27px;vertical-align:top;border-bottom:1px solid #ea8040"><b class="c">l</b><b class="c">i</b><b class="c">n</b><b class="c">e</b><b class="c">&nbsp;</b><b class="c">7</b><b class="c">2</b></span><b class="c">)</b></div>
 <div class="t" style="left:2px;top:117px;font-family:'Liberation Serif',serif;font-style:italic;font-weight:bold;font-size:40px;color:#111;letter-spacing:-3px">fx</div>
 <div class="a" style="left:29px;top:158px;border-left:3px solid transparent;border-right:3px solid transparent;border-top:4px solid #111"></div>
 <svg class="a" style="left:42px;top:133px" width="24" height="19" viewBox="0 0 24 19"><path d="M1.5 1L9.5 9.5L1.5 18M13.5 1L21.5 9.5L13.5 18" stroke="#7a7a7a" stroke-width="1.4" fill="none"/></svg>
</div>
<!--ENDCMD-->
<div id="ws" class="a" style="left:1382px;top:213px;width:533px;height:786px;background:#fff;border-left:1px solid #c8c8c8">
 <div class="a" style="left:0;top:0;width:533px;height:26px;background:linear-gradient(#f6f6f6,#e6e6e6);border-bottom:1px solid #d4d4d4"></div>
 <div class="t" style="left:6px;top:5px;font-size:15px;color:#444">工作区</div>
 <svg class="a" style="left:509px;top:5px" width="16" height="16" viewBox="0 0 16 16"><circle cx="8" cy="8" r="6.5" fill="#fafafa" stroke="#777" stroke-width="1.3"/><path d="M4.5 6.5h7L8 11z" fill="#666"/></svg>
 <div class="a" style="left:0;top:26px;width:529px;height:758px;border:1px solid #c8c8c8;border-top:none;background:#fff"></div>
 <div class="a" style="left:1px;top:27px;width:527px;height:30px;background:#fff;border-bottom:1px solid #f0f0f0"></div>
 <div class="t" style="left:7px;top:34px;font-size:15px;color:#222">名称</div>
 <div class="a" style="left:41px;top:41px;border-left:4px solid transparent;border-right:4px solid transparent;border-bottom:5px solid #aaa"></div>
 <div class="a" style="left:221px;top:28px;width:1px;height:30px;background:#e8e8e8"></div>
 <div class="t" style="left:227px;top:34px;font-size:15px;color:#222">值</div>
 <svg class="a" style="left:0px;top:60px" width="20" height="20" viewBox="0 0 20 20"><rect x="1" y="1" width="18" height="18" fill="#fff" stroke="#7c8a94" stroke-width="1.4"/><path d="M10 1v18M1 10h18" stroke="#8a969e" stroke-width="1.3"/><rect x="2" y="2" width="7.2" height="7.2" fill="#fbfbf0"/><rect x="10.8" y="2" width="7.2" height="7.2" fill="#f8e890"/><rect x="2" y="10.8" width="7.2" height="7.2" fill="#f8e890"/><rect x="10.8" y="10.8" width="7.2" height="7.2" fill="#f6dc60"/></svg><div class="t" style="left:24px;top:61px;font-size:15px;color:#111">a</div><div class="t" style="left:225px;top:61px;font-size:16.5px;font-style:italic;color:#3a70aa">312x1 double</div>
<svg class="a" style="left:0px;top:80px" width="20" height="20" viewBox="0 0 20 20"><rect x="1" y="1" width="18" height="18" fill="#fff" stroke="#7c8a94" stroke-width="1.4"/><path d="M10 1v18M1 10h18" stroke="#8a969e" stroke-width="1.3"/><rect x="2" y="2" width="7.2" height="7.2" fill="#fbfbf0"/><rect x="10.8" y="2" width="7.2" height="7.2" fill="#f8e890"/><rect x="2" y="10.8" width="7.2" height="7.2" fill="#f8e890"/><rect x="10.8" y="10.8" width="7.2" height="7.2" fill="#f6dc60"/></svg><div class="t" style="left:24px;top:81px;font-size:15px;color:#111">A</div><div class="t" style="left:225px;top:81px;font-size:15.5px;color:#111;letter-spacing:.3px">0.0200</div>
<svg class="a" style="left:0px;top:100px" width="20" height="20" viewBox="0 0 20 20"><rect x="1" y="1" width="18" height="18" fill="#fff" stroke="#7c8a94" stroke-width="1.4"/><path d="M10 1v18M1 10h18" stroke="#8a969e" stroke-width="1.3"/><rect x="2" y="2" width="7.2" height="7.2" fill="#fbfbf0"/><rect x="10.8" y="2" width="7.2" height="7.2" fill="#f8e890"/><rect x="2" y="10.8" width="7.2" height="7.2" fill="#f8e890"/><rect x="10.8" y="10.8" width="7.2" height="7.2" fill="#f6dc60"/></svg><div class="t" style="left:24px;top:101px;font-size:15px;color:#111">bt</div><div class="t" style="left:225px;top:101px;font-size:15.5px;color:#111;letter-spacing:.3px">3.5408e+11</div>
<svg class="a" style="left:0px;top:120px" width="20" height="20" viewBox="0 0 20 20"><rect x="1" y="1" width="18" height="18" fill="#fff" stroke="#7c8a94" stroke-width="1.4"/><path d="M10 1v18M1 10h18" stroke="#8a969e" stroke-width="1.3"/><rect x="2" y="2" width="7.2" height="7.2" fill="#fbfbf0"/><rect x="10.8" y="2" width="7.2" height="7.2" fill="#f8e890"/><rect x="2" y="10.8" width="7.2" height="7.2" fill="#f8e890"/><rect x="10.8" y="10.8" width="7.2" height="7.2" fill="#f6dc60"/></svg><div class="t" style="left:24px;top:121px;font-size:15px;color:#111">cons_DOF</div><div class="t" style="left:225px;top:121px;font-size:16.5px;font-style:italic;color:#3a70aa">1x12 double</div>
<svg class="a" style="left:0px;top:140px" width="20" height="20" viewBox="0 0 20 20"><rect x="1" y="1" width="18" height="18" fill="#fff" stroke="#7c8a94" stroke-width="1.4"/><path d="M10 1v18M1 10h18" stroke="#8a969e" stroke-width="1.3"/><rect x="2" y="2" width="7.2" height="7.2" fill="#fbfbf0"/><rect x="10.8" y="2" width="7.2" height="7.2" fill="#f8e890"/><rect x="2" y="10.8" width="7.2" height="7.2" fill="#f8e890"/><rect x="10.8" y="10.8" width="7.2" height="7.2" fill="#f6dc60"/></svg><div class="t" style="left:24px;top:141px;font-size:15px;color:#111">D</div><div class="t" style="left:225px;top:141px;font-size:15.5px;color:#111;letter-spacing:.3px">[2.5000e+11,1.0000e+11,0;1.0000e+11,2.</div>
<svg class="a" style="left:0px;top:160px" width="20" height="20" viewBox="0 0 20 20"><rect x="1" y="1" width="18" height="18" fill="#fff" stroke="#7c8a94" stroke-width="1.4"/><path d="M10 1v18M1 10h18" stroke="#8a969e" stroke-width="1.3"/><rect x="2" y="2" width="7.2" height="7.2" fill="#fbfbf0"/><rect x="10.8" y="2" width="7.2" height="7.2" fill="#f8e890"/><rect x="2" y="10.8" width="7.2" height="7.2" fill="#f8e890"/><rect x="10.8" y="10.8" width="7.2" height="7.2" fill="#f6dc60"/></svg><div class="t" style="left:24px;top:161px;font-size:15px;color:#111">Disp</div><div class="t" style="left:225px;top:161px;font-size:16.5px;font-style:italic;color:#3a70aa">12x1 double</div>
<svg class="a" style="left:0px;top:180px" width="20" height="20" viewBox="0 0 20 20"><rect x="1" y="1" width="18" height="18" fill="#fff" stroke="#7c8a94" stroke-width="1.4"/><path d="M10 1v18M1 10h18" stroke="#8a969e" stroke-width="1.3"/><rect x="2" y="2" width="7.2" height="7.2" fill="#fbfbf0"/><rect x="10.8" y="2" width="7.2" height="7.2" fill="#f8e890"/><rect x="2" y="10.8" width="7.2" height="7.2" fill="#f8e890"/><rect x="10.8" y="10.8" width="7.2" height="7.2" fill="#f6dc60"/></svg><div class="t" style="left:24px;top:181px;font-size:15px;color:#111">DOF</div><div class="t" style="left:225px;top:181px;font-size:15.5px;color:#111;letter-spacing:.3px">2</div>
<svg class="a" style="left:0px;top:200px" width="20" height="20" viewBox="0 0 20 20"><rect x="1" y="1" width="18" height="18" fill="#fff" stroke="#7c8a94" stroke-width="1.4"/><path d="M10 1v18M1 10h18" stroke="#8a969e" stroke-width="1.3"/><rect x="2" y="2" width="7.2" height="7.2" fill="#fbfbf0"/><rect x="10.8" y="2" width="7.2" height="7.2" fill="#f8e890"/><rect x="2" y="10.8" width="7.2" height="7.2" fill="#f8e890"/><rect x="10.8" y="10.8" width="7.2" height="7.2" fill="#f6dc60"/></svg><div class="t" style="left:24px;top:201px;font-size:15px;color:#111">E</div><div class="t" style="left:225px;top:201px;font-size:15.5px;color:#111;letter-spacing:.3px">2.1000e+11</div>
<svg class="a" style="left:0px;top:220px" width="20" height="20" viewBox="0 0 20 20"><rect x="1" y="1" width="18" height="18" fill="#fff" stroke="#7c8a94" stroke-width="1.4"/><path d="M10 1v18M1 10h18" stroke="#8a969e" stroke-width="1.3"/><rect x="2" y="2" width="7.2" height="7.2" fill="#fbfbf0"/><rect x="10.8" y="2" width="7.2" height="7.2" fill="#f8e890"/><rect x="2" y="10.8" width="7.2" height="7.2" fill="#f8e890"/><rect x="10.8" y="10.8" width="7.2" height="7.2" fill="#f6dc60"/></svg><div class="t" style="left:24px;top:221px;font-size:15px;color:#111">ele_DOF</div><div class="t" style="left:225px;top:221px;font-size:16.5px;font-style:italic;color:#3a70aa">250x6 double</div>
<svg class="a" style="left:0px;top:240px" width="20" height="20" viewBox="0 0 20 20"><rect x="1" y="1" width="18" height="18" fill="#fff" stroke="#7c8a94" stroke-width="1.4"/><path d="M10 1v18M1 10h18" stroke="#8a969e" stroke-width="1.3"/><rect x="2" y="2" width="7.2" height="7.2" fill="#fbfbf0"/><rect x="10.8" y="2" width="7.2" height="7.2" fill="#f8e890"/><rect x="2" y="10.8" width="7.2" height="7.2" fill="#f8e890"/><rect x="10.8" y="10.8" width="7.2" height="7.2" fill="#f6dc60"/></svg><div class="t" style="left:24px;top:241px;font-size:15px;color:#111">ele_H</div><div class="t" style="left:225px;top:241px;font-size:15.5px;color:#111;letter-spacing:.3px">25</div>
<svg class="a" style="left:0px;top:260px" width="20" height="20" viewBox="0 0 20 20"><rect x="1" y="1" width="18" height="18" fill="#fff" stroke="#7c8a94" stroke-width="1.4"/><path d="M10 1v18M1 10h18" stroke="#8a969e" stroke-width="1.3"/><rect x="2" y="2" width="7.2" height="7.2" fill="#fbfbf0"/><rect x="10.8" y="2" width="7.2" height="7.2" fill="#f8e890"/><rect x="2" y="10.8" width="7.2" height="7.2" fill="#f8e890"/><rect x="10.8" y="10.8" width="7.2" height="7.2" fill="#f6dc60"/></svg><div class="t" style="left:24px;top:261px;font-size:15px;color:#111">ele_num</div><div class="t" style="left:225px;top:261px;font-size:15.5px;color:#111;letter-spacing:.3px">250</div>
<svg class="a" style="left:0px;top:280px" width="20" height="20" viewBox="0 0 20 20"><rect x="1" y="1" width="18" height="18" fill="#fff" stroke="#7c8a94" stroke-width="1.4"/><path d="M10 1v18M1 10h18" stroke="#8a969e" stroke-width="1.3"/><rect x="2" y="2" width="7.2" height="7.2" fill="#fbfbf0"/><rect x="10.8" y="2" width="7.2" height="7.2" fill="#f8e890"/><rect x="2" y="10.8" width="7.2" height="7.2" fill="#f8e890"/><rect x="10.8" y="10.8" width="7.2" height="7.2" fill="#f6dc60"/></svg><div class="t" style="left:24px;top:281px;font-size:15px;color:#111">ele_size</div><div class="t" style="left:225px;top:281px;font-size:15.5px;color:#111;letter-spacing:.3px">[0.2000,0.2000]</div>
<svg class="a" style="left:0px;top:300px" width="20" height="20" viewBox="0 0 20 20"><rect x="1" y="1" width="18" height="18" fill="#fff" stroke="#7c8a94" stroke-width="1.4"/><path d="M10 1v18M1 10h18" stroke="#8a969e" stroke-width="1.3"/><rect x="2" y="2" width="7.2" height="7.2" fill="#fbfbf0"/><rect x="10.8" y="2" width="7.2" height="7.2" fill="#f8e890"/><rect x="2" y="10.8" width="7.2" height="7.2" fill="#f8e890"/><rect x="10.8" y="10.8" width="7.2" height="7.2" fill="#f6dc60"/></svg><div class="t" style="left:24px;top:301px;font-size:15px;color:#111">ele_V</div><div class="t" style="left:225px;top:301px;font-size:15.5px;color:#111;letter-spacing:.3px">5</div>
<svg class="a" style="left:0px;top:320px" width="20" height="20" viewBox="0 0 20 20"><rect x="1" y="1" width="18" height="18" fill="#fff" stroke="#7c8a94" stroke-width="1.4"/><path d="M10 1v18M1 10h18" stroke="#8a969e" stroke-width="1.3"/><rect x="2" y="2" width="7.2" height="7.2" fill="#fbfbf0"/><rect x="10.8" y="2" width="7.2" height="7.2" fill="#f8e890"/><rect x="2" y="10.8" width="7.2" height="7.2" fill="#f8e890"/><rect x="10.8" y="10.8" width="7.2" height="7.2" fill="#f6dc60"/></svg><div class="t" style="left:24px;top:321px;font-size:15px;color:#111">element</div><div class="t" style="left:225px;top:321px;font-size:16.5px;font-style:italic;color:#3a70aa">250x3 double</div>
<svg class="a" style="left:0px;top:340px" width="20" height="20" viewBox="0 0 20 20"><rect x="1" y="1" width="18" height="18" fill="#fff" stroke="#7c8a94" stroke-width="1.4"/><path d="M10 1v18M1 10h18" stroke="#8a969e" stroke-width="1.3"/><rect x="2" y="2" width="7.2" height="7.2" fill="#fbfbf0"/><rect x="10.8" y="2" width="7.2" height="7.2" fill="#f8e890"/><rect x="2" y="10.8" width="7.2" height="7.2" fill="#f8e890"/><rect x="10.8" y="10.8" width="7.2" height="7.2" fill="#f6dc60"/></svg><div class="t" style="left:24px;top:341px;font-size:15px;color:#111">height</div><div class="t" style="left:225px;top:341px;font-size:15.5px;color:#111;letter-spacing:.3px">1</div>
<svg class="a" style="left:0px;top:360px" width="20" height="20" viewBox="0 0 20 20"><rect x="1" y="1" width="18" height="18" fill="#fff" stroke="#7c8a94" stroke-width="1.4"/><path d="M10 1v18M1 10h18" stroke="#8a969e" stroke-width="1.3"/><rect x="2" y="2" width="7.2" height="7.2" fill="#fbfbf0"/><rect x="10.8" y="2" width="7.2" height="7.2" fill="#f8e890"/><rect x="2" y="10.8" width="7.2" height="7.2" fill="#f8e890"/><rect x="10.8" y="10.8" width="7.2" height="7.2" fill="#f6dc60"/></svg><div class="t" style="left:24px;top:361px;font-size:15px;color:#111">i</div><div class="t" style="left:225px;top:361px;font-size:15.5px;color:#111;letter-spacing:.3px">250</div>
<svg class="a" style="left:0px;top:380px" width="20" height="20" viewBox="0 0 20 20"><rect x="1" y="1" width="18" height="18" fill="#fff" stroke="#7c8a94" stroke-width="1.4"/><path d="M10 1v18M1 10h18" stroke="#8a969e" stroke-width="1.3"/><rect x="2" y="2" width="7.2" height="7.2" fill="#fbfbf0"/><rect x="10.8" y="2" width="7.2" height="7.2" fill="#f8e890"/><rect x="2" y="10.8" width="7.2" height="7.2" fill="#f8e890"/><rect x="10.8" y="10.8" width="7.2" height="7.2" fill="#f6dc60"/></svg><div class="t" style="left:24px;top:381px;font-size:15px;color:#111">j</div><div class="t" style="left:225px;top:381px;font-size:15.5px;color:#111;letter-spacing:.3px">3</div>
<svg class="a" style="left:0px;top:400px" width="20" height="20" viewBox="0 0 20 20"><rect x="1" y="1" width="18" height="18" fill="#fff" stroke="#7c8a94" stroke-width="1.4"/><path d="M10 1v18M1 10h18" stroke="#8a969e" stroke-width="1.3"/><rect x="2" y="2" width="7.2" height="7.2" fill="#fbfbf0"/><rect x="10.8" y="2" width="7.2" height="7.2" fill="#f8e890"/><rect x="2" y="10.8" width="7.2" height="7.2" fill="#f8e890"/><rect x="10.8" y="10.8" width="7.2" height="7.2" fill="#f6dc60"/></svg><div class="t" style="left:24px;top:401px;font-size:15px;color:#111">ke</div><div class="t" style="left:225px;top:401px;font-size:16.5px;font-style:italic;color:#3a70aa">6x6 double</div>
<svg class="a" style="left:0px;top:420px" width="20" height="20" viewBox="0 0 20 20"><rect x="1" y="1" width="18" height="18" fill="#fff" stroke="#7c8a94" stroke-width="1.4"/><path d="M10 1v18M1 10h18" stroke="#8a969e" stroke-width="1.3"/><rect x="2" y="2" width="7.2" height="7.2" fill="#fbfbf0"/><rect x="10.8" y="2" width="7.2" height="7.2" fill="#f8e890"/><rect x="2" y="10.8" width="7.2" height="7.2" fill="#f8e890"/><rect x="10.8" y="10.8" width="7.2" height="7.2" fill="#f6dc60"/></svg><div class="t" style="left:24px;top:421px;font-size:15px;color:#111">KZ</div><div class="t" style="left:225px;top:421px;font-size:16.5px;font-style:italic;color:#3a70aa">312x312 double</div>
<svg class="a" style="left:0px;top:440px" width="20" height="20" viewBox="0 0 20 20"><rect x="1" y="1" width="18" height="18" fill="#fff" stroke="#7c8a94" stroke-width="1.4"/><path d="M10 1v18M1 10h18" stroke="#8a969e" stroke-width="1.3"/><rect x="2" y="2" width="7.2" height="7.2" fill="#fbfbf0"/><rect x="10.8" y="2" width="7.2" height="7.2" fill="#f8e890"/><rect x="2" y="10.8" width="7.2" height="7.2" fill="#f8e890"/><rect x="10.8" y="10.8" width="7.2" height="7.2" fill="#f6dc60"/></svg><div class="t" style="left:24px;top:441px;font-size:15px;color:#111">long</div><div class="t" style="left:225px;top:441px;font-size:15.5px;color:#111;letter-spacing:.3px">5</div>
<svg class="a" style="left:0px;top:460px" width="20" height="20" viewBox="0 0 20 20"><rect x="1" y="1" width="18" height="18" fill="#fff" stroke="#7c8a94" stroke-width="1.4"/><path d="M10 1v18M1 10h18" stroke="#8a969e" stroke-width="1.3"/><rect x="2" y="2" width="7.2" height="7.2" fill="#fbfbf0"/><rect x="10.8" y="2" width="7.2" height="7.2" fill="#f8e890"/><rect x="2" y="10.8" width="7.2" height="7.2" fill="#f8e890"/><rect x="10.8" y="10.8" width="7.2" height="7.2" fill="#f6dc60"/></svg><div class="t" style="left:24px;top:461px;font-size:15px;color:#111">new_node</div><div class="t" style="left:225px;top:461px;font-size:16.5px;font-style:italic;color:#3a70aa">156x2 double</div>
<svg class="a" style="left:0px;top:480px" width="20" height="20" viewBox="0 0 20 20"><rect x="1" y="1" width="18" height="18" fill="#fff" stroke="#7c8a94" stroke-width="1.4"/><path d="M10 1v18M1 10h18" stroke="#8a969e" stroke-width="1.3"/><rect x="2" y="2" width="7.2" height="7.2" fill="#fbfbf0"/><rect x="10.8" y="2" width="7.2" height="7.2" fill="#f8e890"/><rect x="2" y="10.8" width="7.2" height="7.2" fill="#f8e890"/><rect x="10.8" y="10.8" width="7.2" height="7.2" fill="#f6dc60"/></svg><div class="t" style="left:24px;top:481px;font-size:15px;color:#111">node</div><div class="t" style="left:225px;top:481px;font-size:16.5px;font-style:italic;color:#3a70aa">156x2 double</div>
<svg class="a" style="left:0px;top:500px" width="20" height="20" viewBox="0 0 20 20"><rect x="1" y="1" width="18" height="18" fill="#fff" stroke="#7c8a94" stroke-width="1.4"/><path d="M10 1v18M1 10h18" stroke="#8a969e" stroke-width="1.3"/><rect x="2" y="2" width="7.2" height="7.2" fill="#fbfbf0"/><rect x="10.8" y="2" width="7.2" height="7.2" fill="#f8e890"/><rect x="2" y="10.8" width="7.2" height="7.2" fill="#f8e890"/><rect x="10.8" y="10.8" width="7.2" height="7.2" fill="#f6dc60"/></svg><div class="t" style="left:24px;top:501px;font-size:15px;color:#111">node_num</div><div class="t" style="left:225px;top:501px;font-size:15.5px;color:#111;letter-spacing:.3px">156</div>
<svg class="a" style="left:0px;top:520px" width="20" height="20" viewBox="0 0 20 20"><rect x="1" y="1" width="18" height="18" fill="#fff" stroke="#7c8a94" stroke-width="1.4"/><path d="M10 1v18M1 10h18" stroke="#8a969e" stroke-width="1.3"/><rect x="2" y="2" width="7.2" height="7.2" fill="#fbfbf0"/><rect x="10.8" y="2" width="7.2" height="7.2" fill="#f8e890"/><rect x="2" y="10.8" width="7.2" height="7.2" fill="#f8e890"/><rect x="10.8" y="10.8" width="7.2" height="7.2" fill="#f6dc60"/></svg><div class="t" style="left:24px;top:521px;font-size:15px;color:#111">num</div><div class="t" style="left:225px;top:521px;font-size:15.5px;color:#111;letter-spacing:.3px">156</div>
<svg class="a" style="left:0px;top:540px" width="20" height="20" viewBox="0 0 20 20"><rect x="1" y="1" width="18" height="18" fill="#fff" stroke="#7c8a94" stroke-width="1.4"/><path d="M10 1v18M1 10h18" stroke="#8a969e" stroke-width="1.3"/><rect x="2" y="2" width="7.2" height="7.2" fill="#fbfbf0"/><rect x="10.8" y="2" width="7.2" height="7.2" fill="#f8e890"/><rect x="2" y="10.8" width="7.2" height="7.2" fill="#f8e890"/><rect x="10.8" y="10.8" width="7.2" height="7.2" fill="#f6dc60"/></svg><div class="t" style="left:24px;top:541px;font-size:15px;color:#111">P</div><div class="t" style="left:225px;top:541px;font-size:16.5px;font-style:italic;color:#3a70aa">1x312 double</div>
<svg class="a" style="left:0px;top:560px" width="20" height="20" viewBox="0 0 20 20"><rect x="1" y="1" width="18" height="18" fill="#fff" stroke="#7c8a94" stroke-width="1.4"/><path d="M10 1v18M1 10h18" stroke="#8a969e" stroke-width="1.3"/><rect x="2" y="2" width="7.2" height="7.2" fill="#fbfbf0"/><rect x="10.8" y="2" width="7.2" height="7.2" fill="#f8e890"/><rect x="2" y="10.8" width="7.2" height="7.2" fill="#f8e890"/><rect x="10.8" y="10.8" width="7.2" height="7.2" fill="#f6dc60"/></svg><div class="t" style="left:24px;top:561px;font-size:15px;color:#111">PZ</div><div class="t" style="left:225px;top:561px;font-size:16.5px;font-style:italic;color:#3a70aa">312x1 double</div>
<svg class="a" style="left:0px;top:580px" width="20" height="20" viewBox="0 0 20 20"><rect x="1" y="1" width="18" height="18" fill="#fff" stroke="#7c8a94" stroke-width="1.4"/><path d="M10 1v18M1 10h18" stroke="#8a969e" stroke-width="1.3"/><rect x="2" y="2" width="7.2" height="7.2" fill="#fbfbf0"/><rect x="10.8" y="2" width="7.2" height="7.2" fill="#f8e890"/><rect x="2" y="10.8" width="7.2" height="7.2" fill="#f8e890"/><rect x="10.8" y="10.8" width="7.2" height="7.2" fill="#f6dc60"/></svg><div class="t" style="left:24px;top:581px;font-size:15px;color:#111">q</div><div class="t" style="left:225px;top:581px;font-size:15.5px;color:#111;letter-spacing:.3px">100</div>
<svg class="a" style="left:0px;top:600px" width="20" height="20" viewBox="0 0 20 20"><rect x="1" y="1" width="18" height="18" fill="#fff" stroke="#7c8a94" stroke-width="1.4"/><path d="M10 1v18M1 10h18" stroke="#8a969e" stroke-width="1.3"/><rect x="2" y="2" width="7.2" height="7.2" fill="#fbfbf0"/><rect x="10.8" y="2" width="7.2" height="7.2" fill="#f8e890"/><rect x="2" y="10.8" width="7.2" height="7.2" fill="#f8e890"/><rect x="10.8" y="10.8" width="7.2" height="7.2" fill="#f6dc60"/></svg><div class="t" style="left:24px;top:601px;font-size:15px;color:#111">SF</div><div class="t" style="left:225px;top:601px;font-size:15.5px;color:#111;letter-spacing:.3px">4.5974e+05</div>
<svg class="a" style="left:0px;top:620px" width="20" height="20" viewBox="0 0 20 20"><rect x="1" y="1" width="18" height="18" fill="#fff" stroke="#7c8a94" stroke-width="1.4"/><path d="M10 1v18M1 10h18" stroke="#8a969e" stroke-width="1.3"/><rect x="2" y="2" width="7.2" height="7.2" fill="#fbfbf0"/><rect x="10.8" y="2" width="7.2" height="7.2" fill="#f8e890"/><rect x="2" y="10.8" width="7.2" height="7.2" fill="#f8e890"/><rect x="10.8" y="10.8" width="7.2" height="7.2" fill="#f6dc60"/></svg><div class="t" style="left:24px;top:621px;font-size:15px;color:#111">sgm</div><div class="t" style="left:225px;top:621px;font-size:16.5px;font-style:italic;color:#3a70aa">3x250 double</div>
<svg class="a" style="left:0px;top:640px" width="20" height="20" viewBox="0 0 20 20"><rect x="1" y="1" width="18" height="18" fill="#fff" stroke="#7c8a94" stroke-width="1.4"/><path d="M10 1v18M1 10h18" stroke="#8a969e" stroke-width="1.3"/><rect x="2" y="2" width="7.2" height="7.2" fill="#fbfbf0"/><rect x="10.8" y="2" width="7.2" height="7.2" fill="#f8e890"/><rect x="2" y="10.8" width="7.2" height="7.2" fill="#f8e890"/><rect x="10.8" y="10.8" width="7.2" height="7.2" fill="#f6dc60"/></svg><div class="t" style="left:24px;top:641px;font-size:15px;color:#111">t</div><div class="t" style="left:225px;top:641px;font-size:15.5px;color:#111;letter-spacing:.3px">0.1000</div>
<svg class="a" style="left:0px;top:660px" width="20" height="20" viewBox="0 0 20 20"><rect x="1" y="1" width="18" height="18" fill="#fff" stroke="#7c8a94" stroke-width="1.4"/><path d="M10 1v18M1 10h18" stroke="#8a969e" stroke-width="1.3"/><rect x="2" y="2" width="7.2" height="7.2" fill="#fbfbf0"/><rect x="10.8" y="2" width="7.2" height="7.2" fill="#f8e890"/><rect x="2" y="10.8" width="7.2" height="7.2" fill="#f8e890"/><rect x="10.8" y="10.8" width="7.2" height="7.2" fill="#f6dc60"/></svg><div class="t" style="left:24px;top:661px;font-size:15px;color:#111">u</div><div class="t" style="left:225px;top:661px;font-size:15.5px;color:#111;letter-spacing:.3px">0.4000</div>

 <div class="a" style="left:1px;top:764px;width:527px;height:19px;background:#f0f0f0"></div>
 <div class="a" style="left:22px;top:771px;width:456px;height:6px;background:#8a8a8a"></div>
</div>
<!--ENDWS-->
</body></html>
